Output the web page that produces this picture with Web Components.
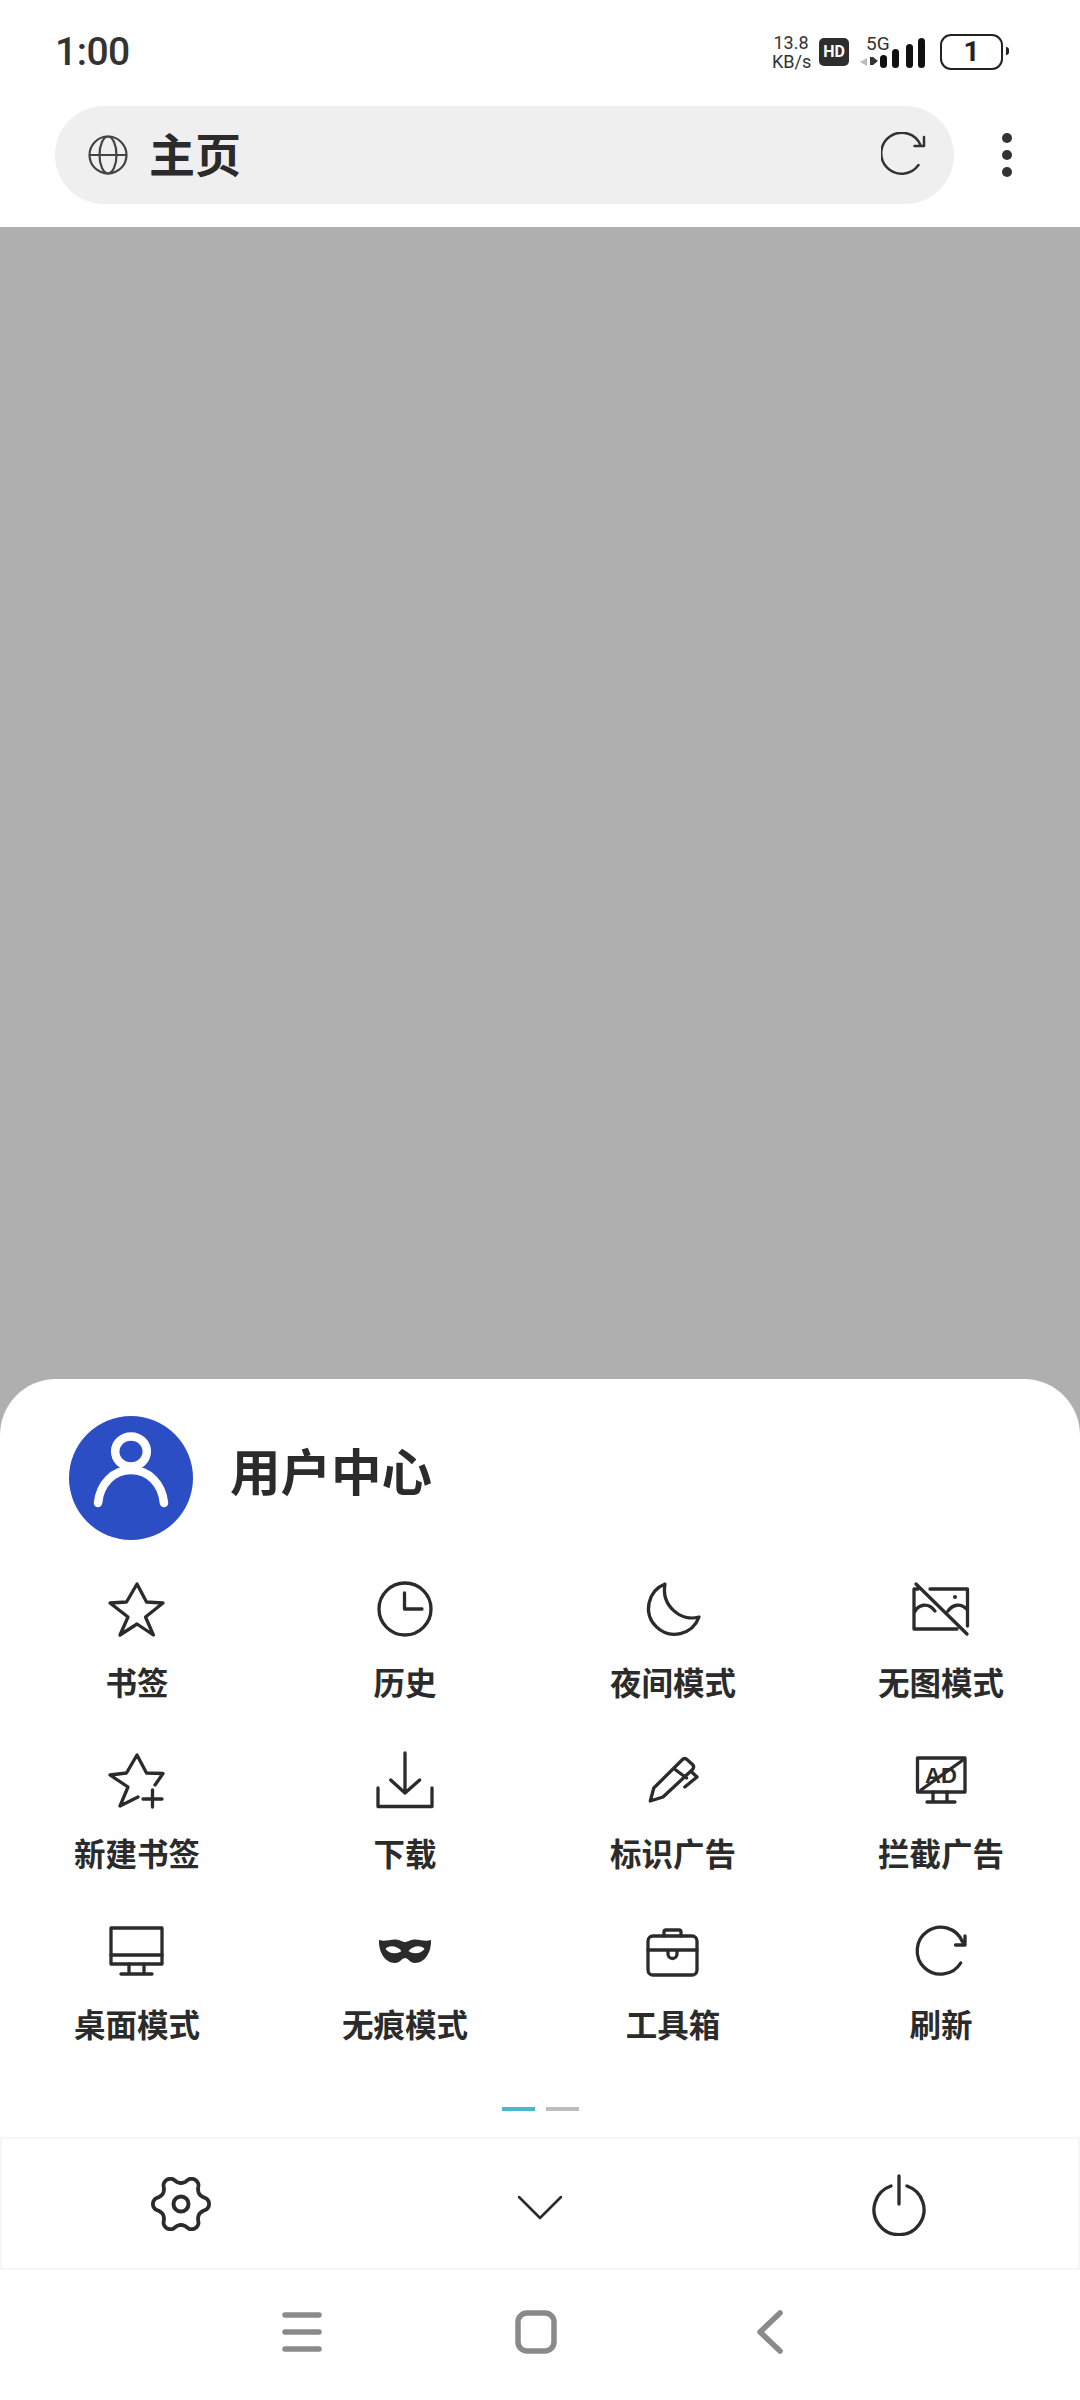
<!DOCTYPE html>
<html lang="zh-CN">
<head>
<meta charset="utf-8">
<title>主页</title>
<style>
	html, body {
		margin: 0;
		padding: 0;
		height: 2400px;
		background: #afafaf;
		font-family: 'Noto Sans CJK SC', 'Noto Sans', sans-serif;
		color: #2b2b2b;
	}

	body {
		display: flex;
		flex-direction: column;
	}

	.spacer {
		flex: 1;
	}

	svg.i {
		fill: none;
		stroke: #2b2b2b;
		stroke-width: 3.300;
		stroke-linecap: round;
		stroke-linejoin: round;
	}

	svg.i .solid {
		fill: #2b2b2b;
		stroke: none;
	}
</style>
</head>
<body>
	<top-bar></top-bar>
	<div class="spacer"></div>
	<menu-sheet>
		<user-row slot="user">用户中心</user-row>

		<menu-item>
			<svg slot="icon" class="i" width="60" height="60" viewBox="0 0 60 60"><path d="M30 4 39.5 22 56 23 38.5 37 46.4 55 30 44 13 55 21 37 3 23 19.500 22Z"/></svg>
			书签
		</menu-item>
		<menu-item>
			<svg slot="icon" class="i" width="60" height="60" viewBox="0 0 60 60"><circle cx="30" cy="29" r="26"/><path d="M29.500 13V29H47"/></svg>
			历史
		</menu-item>
		<menu-item>
			<svg slot="icon" class="i" width="60" height="60" viewBox="0 0 60 60"><path d="M22 4A26 26 0 1 0 56 37C38 42 18 26 22 4Z"/></svg>
			夜间模式
		</menu-item>
		<menu-item>
			<svg slot="icon" class="i" width="60" height="60" viewBox="0 0 60 60"><path d="M5 4 56 54M19 9H56.500V46M46 49H3V9H7M3 33C7 24 17 22 24 31M37 31C42 24 50 23 56.500 30"/><circle class="solid" cx="44" cy="17" r="2"/></svg>
			无图模式
		</menu-item>

		<menu-item>
			<svg slot="icon" class="i" width="60" height="60" viewBox="0 -1 60 60"><path d="M48 33 56 21.500 39.500 21 30 3 19.500 21 3 23 21 35 13 54 31 45M36 47H55M45.500 38V55"/></svg>
			新建书签
		</menu-item>
		<menu-item>
			<svg slot="icon" class="i" width="60" height="60" viewBox="0 -1 60 60"><path d="M30 1V41M15.700 28 30 41 44.700 28M3 36V54.500H57V36"/></svg>
			下载
		</menu-item>
		<menu-item>
			<svg slot="icon" class="i" width="60" height="60" viewBox="0 -1 60 60"><path d="M7.300 49 10.800 36 39 8Q41.800 5 44.500 8L49.500 12.500Q52 15 49 18L20 45ZM31.500 17 43.500 26M48.700 20 54 25 41.800 35"/></svg>
			标识广告
		</menu-item>
		<menu-item>
			<svg slot="icon" class="i" width="60" height="60" viewBox="0 -1 60 60"><rect x="6.500" y="6" width="47.500" height="34"/><path d="M52 8 10 38M22 40V50M36 40V50M16 50H44"/><text class="solid" x="30" y="31" text-anchor="middle" font-family="Liberation Sans" font-size="22">AD</text></svg>
			拦截广告
		</menu-item>

		<menu-item>
			<svg slot="icon" class="i" width="60" height="60" viewBox="0 -2 60 60"><rect x="4" y="4" width="51" height="36"/><path d="M4 31H55M22 40V50M37 40V50M14 50H45"/></svg>
			桌面模式
		</menu-item>
		<menu-item>
			<svg slot="icon" width="60" height="60" viewBox="0 -2 60 60"><path fill="#2b2b2b" fill-rule="evenodd" d="M4 16C10 18 14 15.500 20 15.500 25 15.500 27 18 30 18 33 18 35 15.500 40 15.500 46 15.500 50 18 56 16 56.500 28 50 39 40 39 35 39 33 34 30 34 27 34 25 39 20 39 10 39 3.500 28 4 16ZM10.500 25C13 21 22 21 26.500 27 22 30.500 14 30 10.500 25ZM49.500 25C47 21 38 21 33.500 27 38 30.500 46 30 49.500 25Z"/></svg>
			无痕模式
		</menu-item>
		<menu-item>
			<svg slot="icon" class="i" width="60" height="60" viewBox="0 -2 60 60"><rect x="5" y="12" width="49" height="39" rx="5"/><path d="M21 12V8Q21 6 23 6H36Q38 6 38 8V12M5 26H54M25 26V30A4.500 4.500 0 0 0 34 30V26"/></svg>
			工具箱
		</menu-item>
		<menu-item>
			<svg slot="icon" class="i" width="60" height="60" viewBox="0 -2 60 60"><path d="M49.700 39A23.500 23.500 0 1 1 51.400 17.700M54 12V21H44.500"/></svg>
			刷新
		</menu-item>
	</menu-sheet>

	<script>
		const FONT = `'Noto Sans CJK SC', 'Noto Sans', sans-serif`

		class TopBar extends HTMLElement {
			constructor() {
				super()

				const shadow = this.attachShadow({ mode: 'open' })

				shadow.innerHTML = `
				<style>
					:host {
						display: block;
						background: #fff;
						height: 227px;
					}

					.status {
						height: 104px;
						display: flex;
						align-items: center;
						padding: 0 77px 0 55px;
						font-family: Roboto, sans-serif;
						color: #333;
					}

					.time {
						font-size: 39px;
						font-weight: 500;
						letter-spacing: -0.5px;
						margin-right: auto;
					}

					.speed {
						font-size: 18px;
						line-height: 19px;
						text-align: center;
						width: 38px;
						margin-right: 9px;
					}

					.hd {
						width: 30px;
						height: 28px;
						border-radius: 5px;
						background: #2e2e2e;
						color: #fff;
						font: 700 16px/28px Roboto, sans-serif;
						text-align: center;
						margin-right: 10px;
					}

					.signal {
						margin-right: 15px;
						display: block;
					}

					.battery {
						position: relative;
						box-sizing: border-box;
						width: 63px;
						height: 36px;
						border: 2.5px solid #222;
						border-radius: 11px;
						font: 700 28px/31px Roboto, sans-serif;
						color: #222;
						text-align: center;
					}

					.battery::after {
						content: '';
						position: absolute;
						right: -8px;
						top: 11px;
						width: 3px;
						height: 8px;
						background: #222;
						border-radius: 0 3px 3px 0;
					}

					.row {
						display: flex;
						align-items: center;
						padding: 2px 0 0 55px;
					}

					.address {
						width: 899px;
						height: 98px;
						border-radius: 49px;
						background: #efefef;
						display: flex;
						align-items: center;
						box-sizing: border-box;
						padding: 0 27px 0 33px;
						font: 700 46px/98px ${FONT};
						color: #2b2b2b;
					}

					.title {
						margin-left: 21px;
						margin-right: auto;
						position: relative;
						top: -3px;
					}

					.dots {
						margin-left: 48px;
						display: flex;
						flex-direction: column;
						gap: 7px;
					}

					.dots i {
						width: 10px;
						height: 10px;
						border-radius: 50%;
						background: #333;
					}

					svg {
						display: block;
					}
				</style>
				<div class="status">
					<span class="time">1:00</span>
					<div class="speed">13.8<br>KB/s</div>
					<div class="hd">HD</div>
					<svg class="signal" width="66" height="44" viewBox="0 -4 66 44">
						<text x="7" y="16" font-family="Roboto" font-size="19" fill="#333">5G</text>
						<path d="M8 24 1 28 8 32Z" fill="#bbb"/>
						<path d="M11 23H14L19 27 14 31H11Z" fill="#333"/>
						<rect x="21" y="21" width="7" height="13" rx="3.500" fill="#111"/>
						<rect x="33" y="15" width="7" height="19" rx="3.500" fill="#111"/>
						<rect x="47" y="10" width="7" height="24" rx="3.500" fill="#111"/>
						<rect x="59" y="4" width="7" height="30" rx="3.500" fill="#111"/>
					</svg>
					<div class="battery">1</div>
				</div>
				<div class="row">
					<div class="address">
						<svg width="40" height="40" viewBox="0 0 40 40" fill="none" stroke="#444" stroke-width="2.200">
							<circle cx="20" cy="20" r="18.500"/>
							<ellipse cx="20" cy="20" rx="8.500" ry="18.500"/>
							<path d="M1.500 20H38.500"/>
						</svg>
						<span class="title">主页</span>
						<svg width="46" height="46" viewBox="0 0 46 46" fill="none" stroke="#333" stroke-width="2.500" stroke-linecap="round" stroke-linejoin="round">
							<path d="M37.500 33A20.500 20.500 0 1 1 39.500 13M43 5V14H33.500"/>
						</svg>
					</div>
					<div class="dots"><i></i><i></i><i></i></div>
				</div>
				`
			}
		}

		class MenuSheet extends HTMLElement {
			constructor() {
				super()

				const shadow = this.attachShadow({ mode: 'open' })

				shadow.innerHTML = `
				<style>
					:host {
						display: block;
						background: #fff;
						border-radius: 56px 56px 0 0;
						padding-top: 37px;
					}

					.grid {
						display: grid;
						grid-template-columns: repeat(4, 268px);
						grid-auto-rows: 171px;
						padding-left: 3px;
						margin-top: 40px;
					}
				</style>
				<slot name="user"></slot>
				<div class="grid"><slot></slot></div>
				<pager-dots></pager-dots>
				<tool-bar></tool-bar>
				<nav-bar></nav-bar>
				`
			}
		}

		class UserRow extends HTMLElement {
			constructor() {
				super()

				const shadow = this.attachShadow({ mode: 'open' })

				shadow.innerHTML = `
				<style>
					:host {
						display: flex;
						align-items: center;
						gap: 37px;
						padding-left: 69px;
						font: 700 50.500px/124px ${FONT};
						color: #2b2b2b;
					}

					svg {
						display: block;
					}

					span {
						position: relative;
						top: -9px;
					}
				</style>
				<svg width="124" height="124" viewBox="0 0 124 124">
					<circle cx="62" cy="62" r="62" fill="#2b4ec4"/>
					<g fill="none" stroke="#fff" stroke-width="8.500" stroke-linecap="round">
						<ellipse cx="62" cy="35.500" rx="15.800" ry="15"/>
						<path d="M29 87C31 68 44 54 62 54 80 54 93 68 95 87"/>
					</g>
				</svg>
				<span><slot></slot></span>
				`
			}
		}

		class MenuItem extends HTMLElement {
			constructor() {
				super()

				const shadow = this.attachShadow({ mode: 'open' })

				shadow.innerHTML = `
				<style>
					:host {
						display: flex;
						flex-direction: column;
						align-items: center;
						font: 700 31.500px/40px ${FONT};
						color: #2b2b2b;
					}

					.icon {
						height: 60px;
						margin-bottom: 21px;
					}

					::slotted(svg) {
						display: block;
					}
				</style>
				<div class="icon"><slot name="icon"></slot></div>
				<div><slot></slot></div>
				`
			}
		}

		class PagerDots extends HTMLElement {
			constructor() {
				super()

				const shadow = this.attachShadow({ mode: 'open' })

				shadow.innerHTML = `
				<style>
					:host {
						display: flex;
						justify-content: center;
						gap: 11px;
						margin-top: 14px;
					}

					i {
						width: 33px;
						height: 4px;
						background: #bdbdbd;
					}

					i:first-of-type {
						background: #4cb8c9;
					}
				</style>
				<i></i><i></i>
				`
			}
		}

		function gearPath(cx, cy) {
			let d = ''
			for (let a = 0; a < 360; a += 3) {
				const t = (a * Math.PI) / 180
				const c = Math.cos(6 * t)
				const r = 24.5 + 3.6 * Math.sign(c) * Math.pow(Math.abs(c), 0.7)
				d += `${a ? 'L' : 'M'}${(cx + r * Math.cos(t)).toFixed(1)} ${(cy + r * Math.sin(t)).toFixed(1)}`
			}
			return d + 'Z'
		}

		class ToolBar extends HTMLElement {
			constructor() {
				super()

				const shadow = this.attachShadow({ mode: 'open' })

				shadow.innerHTML = `
				<style>
					:host {
						display: grid;
						grid-template-columns: repeat(3, 1fr);
						align-items: center;
						justify-items: center;
						box-sizing: border-box;
						height: 133px;
						margin-top: 26px;
						border: 2px solid #f6f6f6;
					}

					svg {
						display: block;
						fill: none;
						stroke: #2b2b2b;
						stroke-width: 3.300;
						stroke-linecap: round;
						stroke-linejoin: round;
					}
				</style>
				<svg style="margin-right:1px" width="60" height="60" viewBox="0 0 60 60"><path d="${gearPath(30, 30)}" stroke-width="3.800"/><circle cx="30" cy="30" r="7.500" stroke-width="4"/></svg>
				<svg style="margin-top:8px" width="46" height="26" viewBox="0 0 46 26"><path d="M2 2 23 23 44 2" stroke-width="2.500"/></svg>
				<svg style="margin:3px 0 0 1px" width="56" height="62" viewBox="0 0 56 62"><path d="M28 2V30"/><path d="M20 12A25 25 0 1 0 36 12"/></svg>
				`
			}
		}

		class NavBar extends HTMLElement {
			constructor() {
				super()

				const shadow = this.attachShadow({ mode: 'open' })

				shadow.innerHTML = `
				<style>
					:host {
						display: grid;
						grid-template-columns: repeat(3, 234px);
						justify-content: center;
						justify-items: center;
						align-items: center;
						height: 130px;
						padding-right: 8px;
						box-sizing: border-box;
					}

					svg {
						display: block;
						fill: none;
						stroke: #8a8a8a;
						stroke-width: 5.500;
						stroke-linecap: round;
						stroke-linejoin: round;
						margin-bottom: 6px;
					}
				</style>
				<svg width="40" height="44" viewBox="0 0 40 44"><path d="M3 5H37M3 22H37M3 39H37"/></svg>
				<svg width="42" height="44" viewBox="0 0 42 44"><rect x="3" y="3" width="36" height="38" rx="9"/></svg>
				<svg width="30" height="44" viewBox="0 0 30 44"><path d="M25 3 5 22 25 41"/></svg>
				`
			}
		}

		customElements.define('top-bar', TopBar)
		customElements.define('menu-sheet', MenuSheet)
		customElements.define('user-row', UserRow)
		customElements.define('menu-item', MenuItem)
		customElements.define('pager-dots', PagerDots)
		customElements.define('tool-bar', ToolBar)
		customElements.define('nav-bar', NavBar)
	</script>
</body>
</html>
